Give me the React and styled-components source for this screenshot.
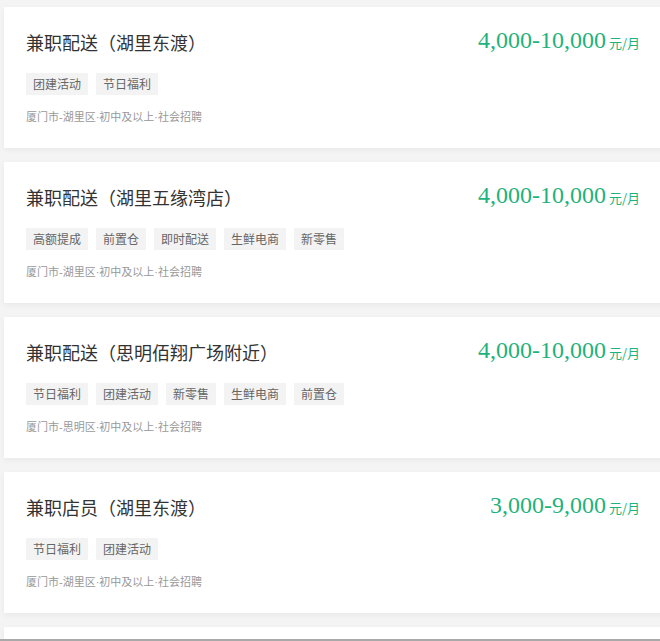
import React from 'react'
import styled, { createGlobalStyle } from 'styled-components'

const GlobalStyle = createGlobalStyle`
  html, body {
    margin: 0;
    padding: 0;
    background: #f4f4f4;
    overflow: hidden;
  }
  body {
    font-family: "Noto Sans CJK SC", "Noto Sans", sans-serif;
  }
`

const jobs = [
  {
    title: '兼职配送（湖里东渡）',
    salary: '4,000-10,000',
    tags: ['团建活动', '节日福利'],
    info: '厦门市-湖里区·初中及以上·社会招聘',
  },
  {
    title: '兼职配送（湖里五缘湾店）',
    salary: '4,000-10,000',
    tags: ['高额提成', '前置仓', '即时配送', '生鲜电商', '新零售'],
    info: '厦门市-湖里区·初中及以上·社会招聘',
  },
  {
    title: '兼职配送（思明佰翔广场附近）',
    salary: '4,000-10,000',
    tags: ['节日福利', '团建活动', '新零售', '生鲜电商', '前置仓'],
    info: '厦门市-思明区·初中及以上·社会招聘',
  },
  {
    title: '兼职店员（湖里东渡）',
    salary: '3,000-9,000',
    tags: ['节日福利', '团建活动'],
    info: '厦门市-湖里区·初中及以上·社会招聘',
  },
  {
    title: '兼职配送（湖里东渡）',
    salary: '4,000-10,000',
    tags: ['团建活动', '节日福利'],
    info: '厦门市-湖里区·初中及以上·社会招聘',
  },
]

const Page = styled.div`
  padding: 7px 0 0 4px;
  overflow: hidden;
`

const Card = styled.div`
  box-sizing: border-box;
  height: 141px;
  background: #fff;
  margin: 0 -10px 14px 0;
  padding: 18px 30px 0 22px;
  box-shadow: 0 2px 6px rgba(0, 0, 0, 0.05);
`

const Head = styled.div`
  display: flex;
  justify-content: space-between;
  align-items: flex-start;
  height: 30px;
`

const Title = styled.div`
  margin-top: 5px;
  font-size: 18px;
  line-height: 24px;
  color: #333;
`

const Salary = styled.div`
  font-family: "Liberation Serif", serif;
  font-size: 24px;
  line-height: 30px;
  color: #1eb27c;
  white-space: nowrap;
`

const Unit = styled.span`
  margin-left: 3px;
  font-family: "Noto Sans CJK SC", sans-serif;
  font-size: 13px;
`

const Tags = styled.div`
  display: flex;
  gap: 8px;
  height: 22px;
  margin-top: 18px;
`

const Tag = styled.span`
  height: 22px;
  padding: 0 7px;
  background: #f3f3f3;
  color: #666;
  font-size: 12px;
  line-height: 22px;
`

const Info = styled.div`
  height: 16px;
  margin-top: 14px;
  font-family: "Liberation Sans", "Noto Sans CJK SC", sans-serif;
  font-size: 11px;
  line-height: 16px;
  color: #999;
`

const BottomRule = styled.div`
  position: fixed;
  left: 0;
  right: 0;
  bottom: 0;
  height: 2px;
  background: #a9a9a9;
`

const App = () => (
  <>
    <GlobalStyle />
    <Page>
      {jobs.map((job, i) => (
        <Card key={i}>
          <Head>
            <Title>{job.title}</Title>
            <Salary>
              {job.salary}
              <Unit>元/月</Unit>
            </Salary>
          </Head>
          <Tags>
            {job.tags.map(t => (
              <Tag key={t}>{t}</Tag>
            ))}
          </Tags>
          <Info>{job.info}</Info>
        </Card>
      ))}
    </Page>
    <BottomRule />
  </>
)

export default App
